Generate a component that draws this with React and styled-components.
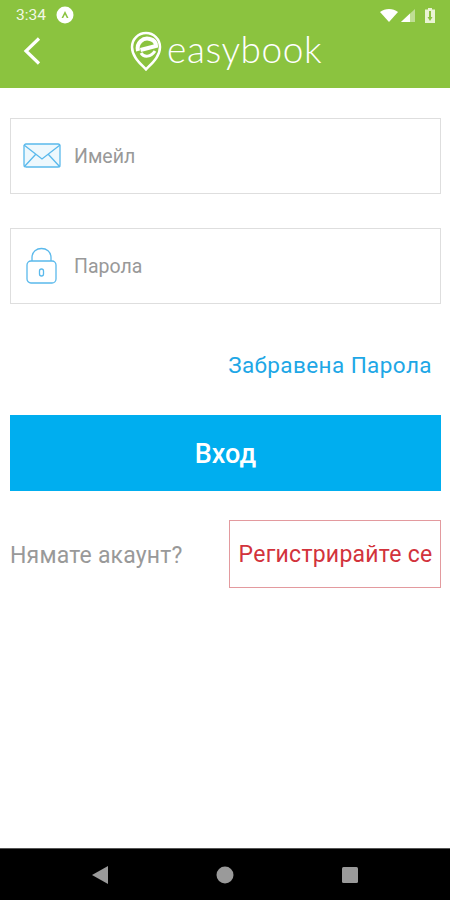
import React from "react";
import styled, { createGlobalStyle } from "styled-components";

const Global = createGlobalStyle`
  html, body { margin: 0; padding: 0; background: #fff; }
  body { font-family: Roboto, "Noto Sans", sans-serif; }
  * { box-sizing: border-box; }
`;
const Screen = styled.div`
  width: 450px; height: 900px; display: flex; flex-direction: column; background: #fff; overflow: hidden;
`;
const Header = styled.header`
  height: 88px; background: #8bc33f; display: flex; flex-direction: column; flex: none;
`;
const StatusBar = styled.div`
  height: 28px; padding: 2px 15px 0 16px; display: flex; align-items: center; color: #f2f8e6;
`;
const Time = styled.span`
  font-size: 15.5px; font-weight: 400; width: 40px;
`;
const StatusRight = styled.div`
  margin-left: auto; display: flex; align-items: center; gap: 3px;
`;
const NavBar = styled.div`
  flex: 1; display: flex; align-items: flex-start; padding-left: 22px;
`;
const Back = styled.svg`
  width: 20px; height: 30px; margin-top: 8px; flex: none;
`;
const Logo = styled.div`
  margin-left: 88px; margin-top: 3px; display: flex; align-items: flex-start; color: #fff;
`;
const LogoWord = styled.span`
  font-family: Lato, sans-serif; font-weight: 300; font-size: 37px; line-height: 40px;
  margin-left: 5px; margin-top: -2px; letter-spacing: 0.6px;
`;
const Main = styled.main`
  flex: 1; padding: 30px 9px 0 10px; display: flex; flex-direction: column;
`;
const Field = styled.div`
  height: 76px; border: 1px solid #dedede; display: flex; align-items: center; margin-bottom: 34px;
`;
const IconSlot = styled.div`
  width: 63px; padding-left: ${p => p.$pad}px; flex: none; display: flex; align-items: center;
`;
const Placeholder = styled.span`
  font-size: 19.5px; color: #999;
`;
const Forgot = styled.a`
  align-self: flex-end; margin: 9px 0 0; padding-right: 9px; font-size: 22.5px; line-height: 36px; font-weight: 400;
  color: #1ea7e6; letter-spacing: .42px;
`;
const Submit = styled.button`
  margin-top: 32px; height: 76px; border: 0; padding: 2px 0 0; background: #00aeef; color: #fff; font: 500 27px Roboto, sans-serif;
  display: block; width: 100%;
`;
const RegisterRow = styled.div`
  margin-top: 29px; display: flex; align-items: center; justify-content: space-between;
`;
const Muted = styled.span`
  font-size: 23px; color: #999; letter-spacing: .2px; padding-top: 3px;
`;
const Register = styled.button`
  width: 212px; height: 68px; padding: 0 0 0 1px; background: #fff; border: 1px solid #e39a9e; color: #d2333c;
  font: 400 23px Roboto, sans-serif; letter-spacing: .25px;
`;
const BottomBar = styled.nav`
  height: 52px; flex: none; background: #000; border-top: 1px solid #555; display: flex; align-items: center; padding: 0 90px;
  justify-content: space-between;
`;
const Glyph = styled.svg`
  width: 20px; height: 20px; fill: #9a9a9a; display: block;
`;

export default function App() {
  return (
    <Screen>
      <Global />
      <Header>
        <StatusBar>
          <Time>3:34</Time>
          <svg width="18" height="18" viewBox="0 0 18 18">
            <circle cx="9" cy="9" r="8.5" fill="#fff" />
            <path d="M5.5 12 L9 5 L12.5 12 L10.8 12 L9 8.4 L7.2 12Z" fill="#8bc33f" />
          </svg>
          <StatusRight>
            <svg width="18" height="13" viewBox="0 0 18 13"><path d="M0 3C5-1 13-1 18 3L9 13Z" fill="#fff" /></svg>
            <svg width="14" height="13" viewBox="0 0 14 13"><path d="M0 13L14 0V13Z" fill="#fff" opacity=".45" /><path d="M0 13L9 4.600V13Z" fill="#fff" /></svg>
            <svg width="10" height="15" viewBox="0 0 10 15" style={{ marginLeft: 7 }}><path d="M3 0H7V1.500H10V15H0V1.500H3Z" fill="#eaf4d4" /><path d="M4 3H6V9H7.500L5 13L2.500 9H4Z" fill="#8bc33f" /></svg>
          </StatusRight>
        </StatusBar>
        <NavBar>
          <Back viewBox="0 0 20 30">
            <path d="M17 2.500L4 15L17 27.500" fill="none" stroke="#fff" strokeWidth="3.200" />
          </Back>
          <Logo>
            <svg width="32" height="40" viewBox="0 0 32 40" fill="none">
              <path d="M16 38.500C11 33 2 26 2 16A14 14 0 0 1 30 16C30 26 21 33 16 38.500Z" stroke="#fff" strokeWidth="2.500" />
              <path d="M8 20C6 12 13 6 20 8C24 9 26 12 26 15L10.500 19" stroke="#fff" strokeWidth="4" />
              <path d="M11 22C14 27 21 26 25 20" stroke="#fff" strokeWidth="3" />
            </svg>
            <LogoWord>easybook</LogoWord>
          </Logo>
        </NavBar>
      </Header>
      <Main>
        <Field>
          <IconSlot $pad={12}>
            <svg width="38" height="26" viewBox="0 0 38 26" fill="none" stroke="#5ab9ec" strokeWidth="1.300">
              <rect x="1" y="1" width="36" height="23" rx="2" fill="#eef8fd" />
              <path d="M1 2L19 16L37 2M1 24L13 11M37 24L25 11" />
            </svg>
          </IconSlot>
          <Placeholder>Имейл</Placeholder>
        </Field>
        <Field>
          <IconSlot $pad={15}>
            <svg width="32" height="38" viewBox="0 0 32 38" fill="none" stroke="#5ab9ec" strokeWidth="1.300">
              <rect x="1" y="14" width="29" height="22" rx="4" />
              <path d="M6 14V10.500C6 -1.500 25 -1.500 25 10.500V14" />
              <rect x="13.500" y="22" width="4" height="7" rx="2" />
            </svg>
          </IconSlot>
          <Placeholder>Парола</Placeholder>
        </Field>
        <Forgot>Забравена Парола</Forgot>
        <Submit>Вход</Submit>
        <RegisterRow>
          <Muted>Нямате акаунт?</Muted>
          <Register>Регистрирайте се</Register>
        </RegisterRow>
      </Main>
      <BottomBar>
        <Glyph viewBox="0 0 20 20"><path d="M2 10L18 1V19Z" /></Glyph>
        <Glyph viewBox="0 0 20 20"><circle cx="10" cy="10" r="8.500" /></Glyph>
        <Glyph viewBox="0 0 20 20"><rect x="2" y="2" width="16" height="16" rx="1.500" /></Glyph>
      </BottomBar>
    </Screen>
  );
}
